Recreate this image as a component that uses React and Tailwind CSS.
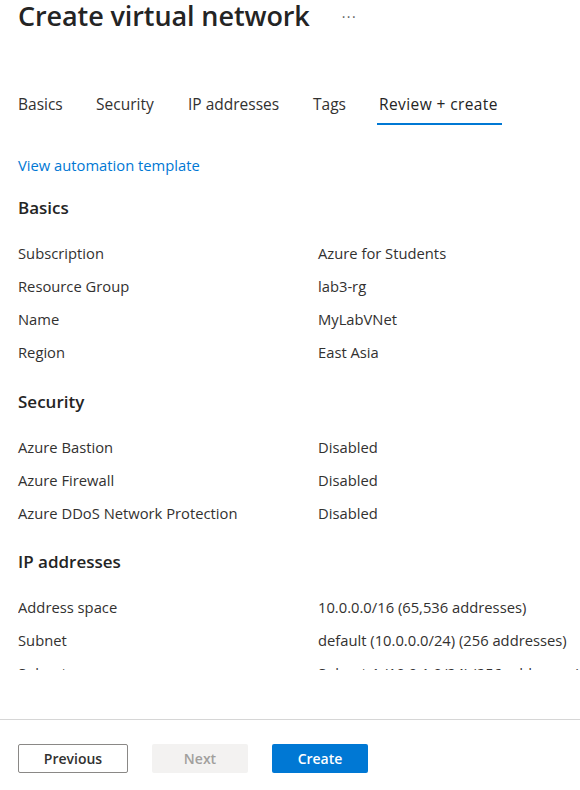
import React from "react";

const font = { fontFamily: '"Open Sans", "Noto Sans", Arial, sans-serif' };

function Row({ label, value }) {
  return (
    <div className="grid grid-cols-[300px_1fr] h-[33px] items-center text-[14.75px] text-[#323130]">
      <div className="whitespace-nowrap">{label}</div>
      <div className="whitespace-nowrap">{value}</div>
    </div>
  );
}

function SectionTitle({ children }) {
  return (
    <div className="h-[33px] flex items-center text-[17px] font-semibold text-[#242424]">
      {children}
    </div>
  );
}

export default function App() {
  const tabs = [
    { t: "Basics", w: "w-[48px]" },
    { t: "Security", w: "w-[62px]" },
    { t: "IP addresses", w: "w-[95px]" },
    { t: "Tags", w: "w-[36px]" },
    { t: "Review + create", w: "w-[125px]" },
  ];
  return (
    <div
      className="w-[580px] h-[790px] bg-white flex flex-col overflow-hidden"
      style={font}
    >
      <div className="h-[719px] flex flex-col overflow-hidden">
        <div className="pl-[18px] flex items-center h-[34px] -mt-[1px]">
          <h1 className="text-[27px] font-semibold text-[#242424] tracking-[-0.1px] whitespace-nowrap">
            Create virtual network
          </h1>
          <span className="ml-[32px] text-[#605e5c] text-[14px] tracking-[1.5px]">
            ···
          </span>
        </div>
        <div className="h-[54px]" />
        <div className="pl-[16px] flex gap-[30px] h-[38px]">
          {tabs.map((x, i) => (
            <div
              key={x.t}
              className={
                x.w +
                " px-[2px] h-full flex items-center text-[15.5px] whitespace-nowrap border-b-2 " +
                (i === 4
                  ? "border-[#0078d4] text-[#242424] tracking-[0.4px]"
                  : "border-transparent text-[#323130]")
              }
            >
              {x.t}
            </div>
          ))}
        </div>
        <div className="pl-[18px] pt-[30px] flex flex-col">
          <div className="h-[20px] flex items-center text-[14.75px] text-[#0078d4]">
            View automation template
          </div>
          <div className="mt-[16px]">
            <SectionTitle>Basics</SectionTitle>
          </div>
          <div className="mt-[13px]">
            <Row label="Subscription" value="Azure for Students" />
            <Row label="Resource Group" value="lab3-rg" />
            <Row label="Name" value="MyLabVNet" />
            <Row label="Region" value="East Asia" />
          </div>
          <div className="mt-[16px]">
            <SectionTitle>Security</SectionTitle>
          </div>
          <div className="mt-[13px]">
            <Row label="Azure Bastion" value="Disabled" />
            <Row label="Azure Firewall" value="Disabled" />
            <Row label="Azure DDoS Network Protection" value="Disabled" />
          </div>
          <div className="mt-[15px]">
            <SectionTitle>IP addresses</SectionTitle>
          </div>
          <div className="mt-[13px] h-[79px] overflow-hidden">
            <Row label="Address space" value="10.0.0.0/16 (65,536 addresses)" />
            <Row label="Subnet" value="default (10.0.0.0/24) (256 addresses)" />
            <Row label="Subnet" value="Subnet-1 (10.0.1.0/24) (256 addresses)" />
          </div>
        </div>
      </div>
      <div className="border-t border-[#d6d6d6] flex-1 px-[18px] pt-[24px] flex gap-[24px] items-start">
        <button className="w-[110px] h-[29px] border border-[#8a8886] rounded-[2px] text-[14px] font-semibold text-[#323130] bg-white">
          Previous
        </button>
        <button className="w-[96px] h-[29px] rounded-[2px] text-[14px] font-semibold text-[#a19f9d] bg-[#f3f2f1]">
          Next
        </button>
        <button className="w-[96px] h-[29px] rounded-[2px] text-[14px] font-semibold text-white bg-[#0078d4]">
          Create
        </button>
      </div>
    </div>
  );
}
